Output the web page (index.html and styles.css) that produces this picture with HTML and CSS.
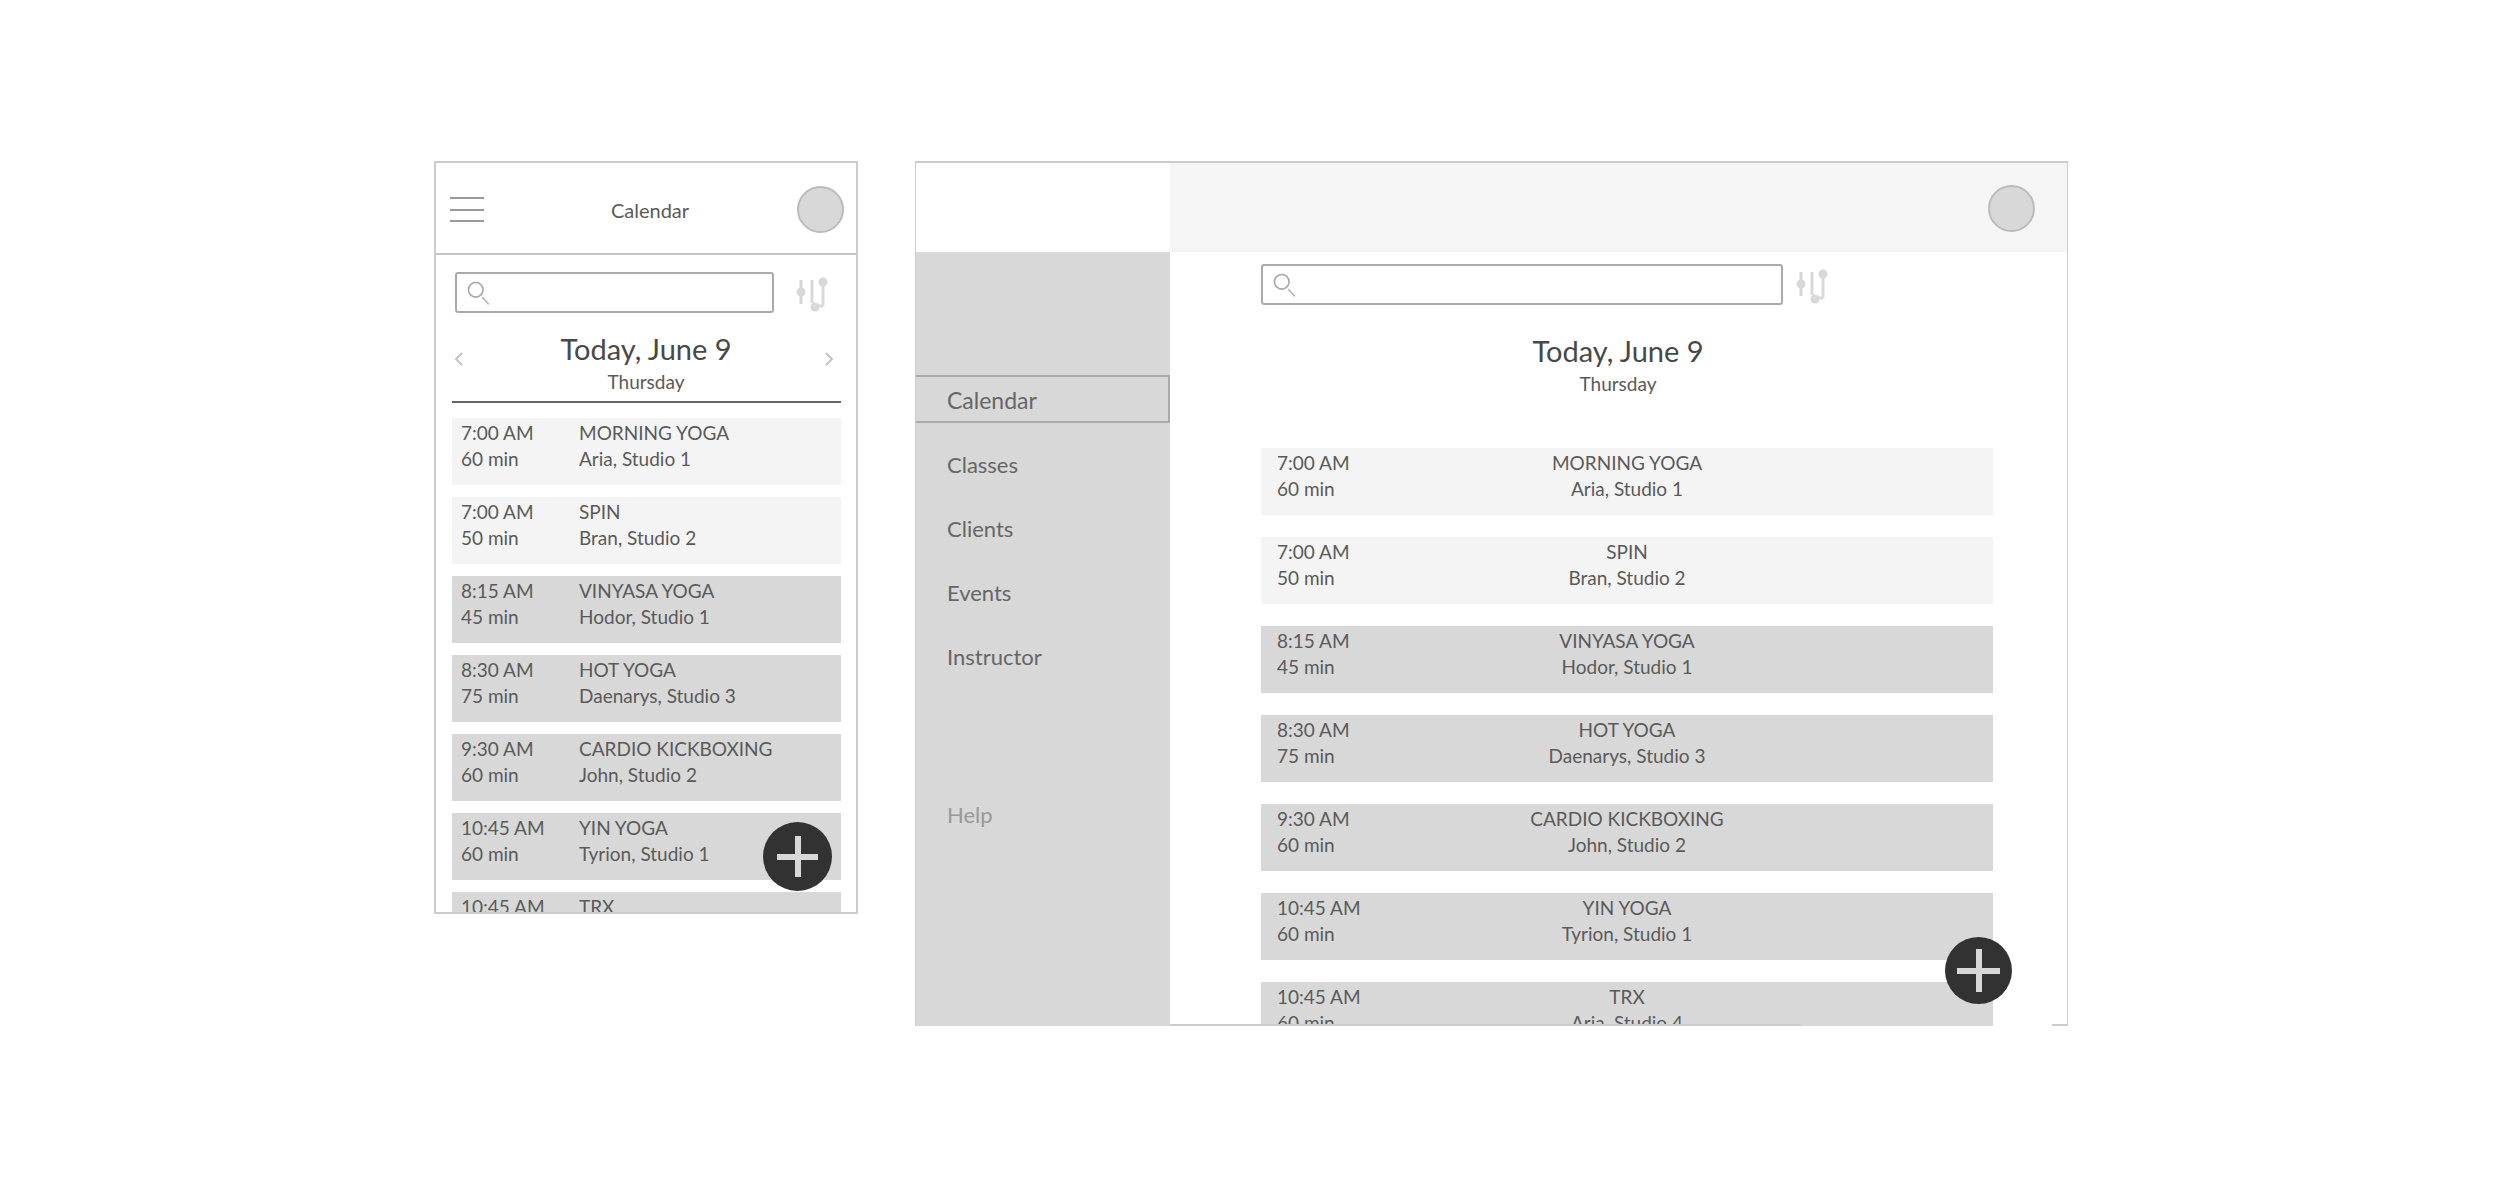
FILE: index.html
```html
<!DOCTYPE html>
<html lang="en">
<head>
	<meta charset="UTF-8">
	<meta name="viewport" content="width=device-width, initial-scale=1.0">
	<title>Calendar</title>
	<link rel="stylesheet" href="styles.css">
</head>
<body>
	<svg class="defs" width="0" height="0">
		<symbol id="search-icon" viewBox="0 0 32 32">
			<circle cx="12" cy="12" r="9" fill="none" stroke="#a8a8a8" stroke-width="2"/>
			<line x1="20" y1="21" x2="28" y2="30" stroke="#b8b8b8" stroke-width="2"/>
		</symbol>
		<symbol id="filter-icon" viewBox="0 0 34 36">
			<g stroke="#d8d8d8" stroke-width="3" fill="none">
				<line x1="6" y1="4" x2="6" y2="28"/>
				<line x1="17" y1="4" x2="17" y2="27"/>
				<line x1="28" y1="6" x2="28" y2="30"/>
				<line x1="21" y1="30" x2="28" y2="30"/>
			</g>
			<g fill="#d8d8d8">
				<circle cx="6" cy="16" r="4.5"/>
				<circle cx="20" cy="31" r="4.5"/>
				<circle cx="28" cy="6" r="4.5"/>
			</g>
		</symbol>
	</svg>

	<div class="page">
		<div class="phone">
			<div class="phone-head">
				<div class="burger"><span></span><span></span><span></span></div>
				<div class="phone-title">Calendar</div>
				<div class="avatar"></div>
			</div>
			<div class="tools phone-tools">
				<div class="search"><svg class="search-icon"><use href="#search-icon"/></svg></div>
				<svg class="filter-icon"><use href="#filter-icon"/></svg>
			</div>
			<div class="date-bar">
				<svg class="chev" viewBox="0 0 10 14"><path d="M8 1 L2 7 L8 13"/></svg>
				<div class="date">
					<div class="date-main">Today, June 9</div>
					<div class="date-sub">Thursday</div>
				</div>
				<svg class="chev" viewBox="0 0 10 14"><path d="M2 1 L8 7 L2 13"/></svg>
			</div>
			<div class="list">
				<div class="row light"><div>7:00 AM<br>60 min</div><div>MORNING YOGA<br>Aria, Studio 1</div></div>
				<div class="row light"><div>7:00 AM<br>50 min</div><div>SPIN<br>Bran, Studio 2</div></div>
				<div class="row"><div>8:15 AM<br>45 min</div><div>VINYASA YOGA<br>Hodor, Studio 1</div></div>
				<div class="row"><div>8:30 AM<br>75 min</div><div>HOT YOGA<br>Daenarys, Studio 3</div></div>
				<div class="row"><div>9:30 AM<br>60 min</div><div>CARDIO KICKBOXING<br>John, Studio 2</div></div>
				<div class="row"><div>10:45 AM<br>60 min</div><div>YIN YOGA<br>Tyrion, Studio 1</div></div>
				<div class="row"><div>10:45 AM<br>60 min</div><div>TRX<br>Aria, Studio 4</div></div>
			</div>
			<div class="fab phone-fab"></div>
		</div>

		<div class="desk">
			<div class="desk-corner"></div>
			<div class="desk-top"><div class="avatar"></div></div>
			<div class="side">
				<div class="nav-item active">Calendar</div>
				<div class="nav-item">Classes</div>
				<div class="nav-item">Clients</div>
				<div class="nav-item">Events</div>
				<div class="nav-item">Instructor</div>
				<div class="nav-item help">Help</div>
			</div>
			<div class="desk-main">
				<div class="tools desk-tools">
					<div class="search"><svg class="search-icon"><use href="#search-icon"/></svg></div>
					<svg class="filter-icon"><use href="#filter-icon"/></svg>
				</div>
				<div class="date desk-date">
					<div class="date-main">Today, June 9</div>
					<div class="date-sub">Thursday</div>
				</div>
				<div class="list desk-list">
					<div class="row light"><div>7:00 AM<br>60 min</div><div>MORNING YOGA<br>Aria, Studio 1</div></div>
					<div class="row light"><div>7:00 AM<br>50 min</div><div>SPIN<br>Bran, Studio 2</div></div>
					<div class="row"><div>8:15 AM<br>45 min</div><div>VINYASA YOGA<br>Hodor, Studio 1</div></div>
					<div class="row"><div>8:30 AM<br>75 min</div><div>HOT YOGA<br>Daenarys, Studio 3</div></div>
					<div class="row"><div>9:30 AM<br>60 min</div><div>CARDIO KICKBOXING<br>John, Studio 2</div></div>
					<div class="row"><div>10:45 AM<br>60 min</div><div>YIN YOGA<br>Tyrion, Studio 1</div></div>
					<div class="row"><div>10:45 AM<br>60 min</div><div>TRX<br>Aria, Studio 4</div></div>
				</div>
			</div>
			<div class="fab desk-fab"></div>
		</div>
	</div>
</body>
</html>
```

FILE: styles.css
```css
body{
	margin: 0;
	background-color: #fff;
	font-family: "Lato", "Liberation Sans", sans-serif;
	color: #5a5a5a;
}
.defs{
	position: absolute;
}
.page{
	display: flex;
	align-items: flex-start;
	gap: 57px;
	padding: 161px 0 0 434px;
}

/* phone */
.phone{
	position: relative;
	box-sizing: border-box;
	width: 424px;
	height: 753px;
	border: 2px solid #ccc;
	overflow: hidden;
}
.phone-head{
	display: flex;
	align-items: center;
	justify-content: space-between;
	box-sizing: border-box;
	height: 92px;
	padding: 3px 12px 0 14px;
	border-bottom: 2px solid #c4c4c4;
}
.burger{
	display: flex;
	flex-direction: column;
	gap: 9.5px;
	width: 34px;
}
.burger span{
	height: 2px;
	background-color: #999;
}
.phone-title{
	margin-left: 19px;
	font-size: 20px;
}
.avatar{
	box-sizing: border-box;
	width: 47px;
	height: 47px;
	border: 2px solid #bbb;
	border-radius: 50%;
	background-color: #d8d8d8;
}
.tools{
	display: flex;
	align-items: center;
}
.search{
	display: flex;
	align-items: center;
	box-sizing: border-box;
	height: 41px;
	padding-left: 9px;
	border: 2px solid #aaa;
	border-radius: 3px;
	background-color: #fff;
}
.search-icon{
	width: 26px;
	height: 26px;
}
.filter-icon{
	width: 34px;
	height: 36px;
}
.phone-tools{
	gap: 21px;
	margin: 17px 0 0 19px;
}
.phone-tools .search{
	width: 319px;
}
.phone-tools .filter-icon{
	margin-top: 2px;
}
.date-bar{
	display: flex;
	align-items: flex-end;
	justify-content: space-between;
	box-sizing: border-box;
	width: 389px;
	margin: 19px 0 0 16px;
	padding: 0 7px 6px 2px;
	border-bottom: 2px solid #666;
}
.date-bar .date{
	margin-left: 4px;
}
.chev{
	width: 10px;
	height: 14px;
	margin-bottom: 29px;
	fill: none;
	stroke: #c4c4c4;
	stroke-width: 2;
}
.date{
	text-align: center;
}
.date-main{
	font-size: 29px;
	line-height: 34px;
	color: #484848;
}
.date-sub{
	margin-top: 3px;
	font-size: 19px;
	line-height: 26px;
}
.list{
	display: flex;
	flex-direction: column;
	gap: 12px;
	margin: 15px 0 0 16px;
	width: 389px;
}
.row{
	display: flex;
	flex: none;
	box-sizing: border-box;
	height: 67px;
	padding: 2px 0 0 9px;
	background-color: #d8d8d8;
	font-size: 19px;
	line-height: 26px;
}
.row.light{
	background-color: #f4f4f4;
}
.row > div:first-child{
	width: 118px;
}
.fab{
	position: absolute;
	border-radius: 50%;
	background-color: #323232;
	background-image: linear-gradient(#d8d8d8, #d8d8d8), linear-gradient(#d8d8d8, #d8d8d8);
	background-repeat: no-repeat;
	background-position: center;
}
.phone-fab{
	left: 327px;
	top: 659px;
	width: 69px;
	height: 69px;
	background-size: 41px 6px, 6px 41px;
}

/* desktop */
.desk{
	position: relative;
	box-sizing: border-box;
	display: grid;
	grid-template-columns: 254px 1fr;
	grid-template-rows: 89px 1fr;
	width: 1153px;
	height: 865px;
	border: 1px solid #ccc;
	border-top-width: 2px;
	border-bottom: 0;
	overflow: hidden;
}
/* the bottom line breaks off under the last row */
.desk::before,
.desk::after{
	content: "";
	position: absolute;
	bottom: 0;
	height: 2px;
	background-color: #ccc;
}
.desk::before{
	left: 0;
	width: 885px;
}
.desk::after{
	right: 0;
	width: 15px;
}
.desk-top{
	display: flex;
	align-items: center;
	justify-content: flex-end;
	padding: 1px 32px 0 0;
	background-color: #f5f5f5;
}
.side{
	position: relative;
	box-sizing: border-box;
	padding-top: 123px;
	background-color: #d8d8d8;
}
.nav-item{
	box-sizing: border-box;
	height: 64px;
	padding: 21px 0 0 31px;
	font-size: 22px;
	line-height: 22px;
	color: #666;
}
.nav-item.active{
	height: 48px;
	margin: 0 0 10px;
	padding: 5px 0 0 31px;
	font-size: 23px;
	line-height: 36px;
	border: 2px solid #aaa;
	border-left: 0;
}
.nav-item.help{
	margin-top: 94px;
	color: #999;
}
.desk-main{
	padding-left: 91px;
}
.desk-tools{
	gap: 12px;
	margin-top: 12px;
}
.desk-tools .search{
	width: 522px;
}
.desk-tools .filter-icon{
	margin-top: 2px;
}
.desk-date{
	width: 714px;
	margin-top: 29px;
}
.desk-list{
	gap: 22px;
	width: 732px;
	margin: 51px 0 0;
}
.desk-list .row{
	display: grid;
	grid-template-columns: 1fr auto 1fr;
	padding-left: 0;
	text-align: center;
}
.desk-list .row > div:first-child{
	width: auto;
	padding-left: 16px;
	text-align: left;
}
.desk-fab{
	left: 1029px;
	top: 774px;
	width: 67px;
	height: 67px;
	background-size: 43px 6px, 6px 43px;
}
```
